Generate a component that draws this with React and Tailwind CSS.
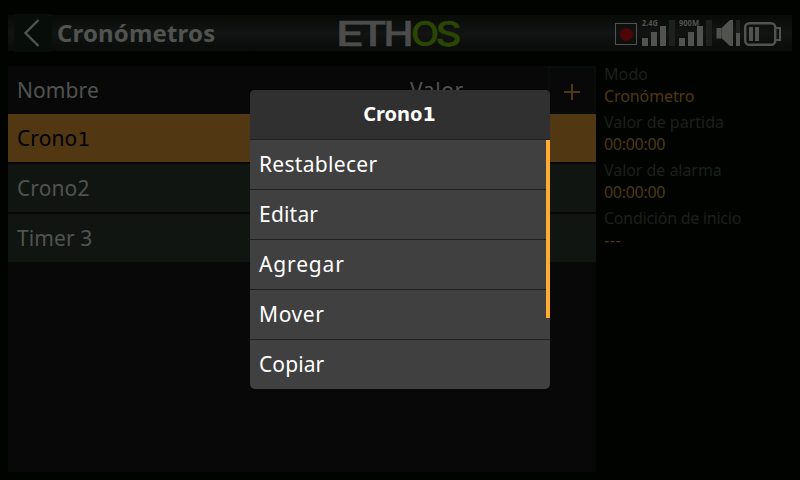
import React from 'react';

const rows = [
  { name: 'Crono', digit: '1', cls: 'bg-[#513812] text-black', digitCls: "font-['DejaVu_Sans'] text-[20px]" },
  { name: 'Crono', digit: '2', cls: 'bg-[#101512] text-[#505350]', digitCls: '' },
  { name: 'Timer ', digit: '3', cls: 'bg-[#101512] text-[#505350]', digitCls: '' },
];

const details = [
  { label: 'Modo', value: 'Cronómetro', ls: 'tracking-[0.1px]', vs: 'tracking-[-0.1px]' },
  { label: 'Valor de partida', value: '00:00:00', ls: 'tracking-[0px]', vs: 'tracking-[-0.3px]' },
  { label: 'Valor de alarma', value: '00:00:00', ls: 'tracking-[-0.05px]', vs: 'tracking-[-0.3px]' },
  { label: 'Condición de inicio', value: '---', ls: 'tracking-[-0.25px]', vs: 'tracking-[0.6px]' },
];

const actions = [
  { label: 'Restablecer', ls: 'tracking-[0.3px]' },
  { label: 'Editar', ls: 'tracking-[0.2px]' },
  { label: 'Agregar', ls: 'tracking-[0.85px]' },
  { label: 'Mover', ls: 'tracking-[0.6px]' },
  { label: 'Copiar', ls: 'tracking-[0.1px]' },
];

function Logo() {
  return (
    <svg width="126" height="44" viewBox="0 -7 126 44" className="overflow-visible font-[Inter] text-[34px] font-medium">
      <g fill="#4c4c4c" stroke="#4c4c4c" strokeWidth="0.6">
        <text x="-1" y="28" textLength="28" lengthAdjust="spacingAndGlyphs">E</text>
        <text x="22" y="28" textLength="28" lengthAdjust="spacingAndGlyphs">T</text>
        <text x="46.5" y="28" textLength="30" lengthAdjust="spacingAndGlyphs">H</text>
      </g>
      <g fill="#2b4502" stroke="#2b4502" strokeWidth="0.6">
        <text x="74" y="28" textLength="28" lengthAdjust="spacingAndGlyphs">O</text>
        <text x="98.5" y="28" textLength="26" lengthAdjust="spacingAndGlyphs">S</text>
      </g>
    </svg>
  );
}

function Status() {
  return (
    <svg width="168" height="36" viewBox="0 -4 168 36" fill="#50544f" className="overflow-visible font-['Noto_Sans'] text-[8px] font-bold">
      <rect x="1.5" y="4.5" width="21" height="21" fill="none" stroke="#505350" />
      <circle cx="12.5" cy="15.5" r="6.5" fill="#500606" />
      <text x="28" y="6.5" textLength="16" lengthAdjust="spacingAndGlyphs">2.4G</text>
      <rect x="28" y="19" width="6" height="8" />
      <rect x="37" y="13" width="6" height="14" />
      <rect x="46" y="7" width="6" height="20" />
      <rect x="55" y="1" width="6" height="26" fill="#1c211e" />
      <text x="65" y="6.5" textLength="20" lengthAdjust="spacingAndGlyphs">900M</text>
      <rect x="65" y="19" width="6" height="8" />
      <rect x="74" y="13" width="6" height="14" />
      <rect x="83" y="7" width="6" height="20" />
      <rect x="92" y="1" width="6" height="26" fill="#1c211e" />
      <path d="M102.500 9h5.200v10.500h-5.200zM108 8.500l8-7.500h3v26h-3l-8-7.500z" />
      <rect x="122" y="1" width="4" height="13" fill="#1c211e" />
      <rect x="122" y="14" width="4" height="13" />
      <rect x="131.200" y="4.200" width="30" height="21.600" rx="4" fill="none" stroke="#50544f" strokeWidth="2.4" />
      <path d="M162 9h4v12h-4" fill="none" stroke="#50544f" strokeWidth="2" />
      <rect x="135" y="8" width="4" height="14" />
      <rect x="141" y="8" width="4" height="14" />
    </svg>
  );
}

export default function App() {
  return (
    <div className="relative flex h-[480px] w-[800px] flex-col overflow-hidden bg-[#000300] px-2 font-['Noto_Sans',sans-serif]">
      <header className="mt-[15px] flex h-9 items-center bg-linear-to-b from-[#080a08] via-[#111412] to-[#090b09]">
        <div className="ml-[6px] flex h-[38px] w-[38px] items-center bg-[#070d09]">
          <svg width="38" height="38" fill="none" stroke="#505350" strokeWidth="2.4">
            <path d="M24.500 6L11.500 19L24.500 32" />
          </svg>
        </div>
        <h1 className="ml-[5px] w-[280px] text-[24px] leading-9 font-bold tracking-[0.15px] text-[#505350]">Cronómetros</h1>
        <Logo />
        <div className="mr-[10px] ml-auto">
          <Status />
        </div>
      </header>

      <main className="mt-[15px] flex h-[406px]">
        <section className="w-[588px] bg-[#080808] text-[21px] tracking-[0.1px] text-[#505350]">
          <div className="flex h-12">
            <div className="w-[402px] pl-[9px] leading-[48px]">Nombre</div>
            <div className="flex-1 leading-[48px] tracking-[0.6px]">Valor</div>
            <div className="flex w-12 items-center justify-center border-2 border-[#080d09]">
              <svg width="16" height="16" stroke="#513812" strokeWidth="2" className="mt-1">
                <path d="M8 0V16M0 8H16" />
              </svg>
            </div>
          </div>
          <div className="flex flex-col gap-0.5">
            {rows.map((row) => (
              <div key={row.name + row.digit} className={'h-12 pl-[9px] leading-[48px] ' + row.cls}>
                {row.name}
                <span className={row.digitCls}>{row.digit}</span>
              </div>
            ))}
          </div>
        </section>
        <aside className="flex-1 pl-2 text-base">
          {details.map((d) => (
            <div key={d.label} className="flex h-12 flex-col">
              <span className={'h-[22px] leading-[17px] text-[#1c201d] ' + d.ls}>{d.label}</span>
              <span className={'leading-[17px] text-[#513812] ' + d.vs}>{d.value}</span>
            </div>
          ))}
        </aside>
      </main>

      <div className="absolute top-[90px] left-[250px] w-[300px] overflow-hidden rounded-[5px] bg-[#404040] text-white">
        <h2 className="h-[49px] bg-[#303030] pr-px text-center text-[20px] leading-[47px] font-bold">
          Crono<span className="font-['DejaVu_Sans'] text-[19px]">1</span>
        </h2>
        <ul className="text-[21px]">
          {actions.map((a) => (
            <li key={a.label} className={'h-[50px] border-t border-[#202020] pl-[9px] leading-[48px] ' + a.ls}>
              {a.label}
            </li>
          ))}
        </ul>
        <div className="absolute top-[50px] right-0 h-[178px] w-1 bg-[#ffad32]" />
      </div>
    </div>
  );
}
